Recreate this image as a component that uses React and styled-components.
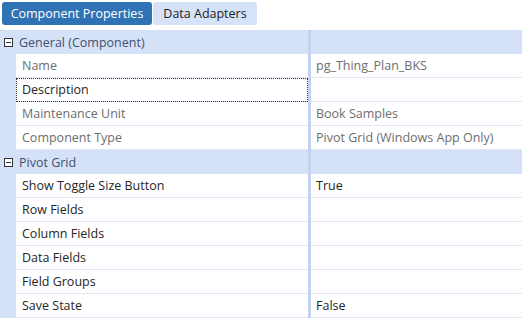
import React from "react";
import styled, { createGlobalStyle } from "styled-components";

const Global = createGlobalStyle`
  html, body { margin: 0; padding: 0; background: #fff; }
  body { font-family: "Open Sans", "Noto Sans", sans-serif; }
`;

const Page = styled.div`
  width: 522px;
  height: 326px;
  overflow: hidden;
  background: #fff;
`;

const TabBar = styled.div`
  display: flex;
  gap: 1px;
  padding: 2px 0 0 2px;
  height: 27px;
  box-sizing: border-box;
`;

const Tab = styled.div`
  height: 23px;
  display: flex;
  align-items: center;
  justify-content: center;
  font-size: 12.5px;
  white-space: nowrap;
  border-radius: 3px;
  box-sizing: border-box;
  width: ${(p) => p.$w}px;
  background: ${(p) => (p.$active ? "#2f73b5" : "#d6e2f7")};
  color: ${(p) => (p.$active ? "#ffffff" : "#1e1e1e")};
`;

const Grid = styled.div`
  margin-top: 3px;
  display: flex;
  flex-direction: column;
`;

const GroupRow = styled.div`
  height: 24px;
  display: flex;
  align-items: center;
  background: #d5e1f7;
`;

const Toggle = styled.div`
  width: 16px;
  display: flex;
  justify-content: center;
  align-items: center;
`;

const GroupTitle = styled.div`
  font-size: 12.5px;
  color: #3f5270;
  padding-left: 3px;
  flex: 0 0 289px;
`;

const GroupDivider = styled.div`
  width: 3px;
  align-self: stretch;
  background: #c3d3ef;
`;

const Row = styled.div`
  height: 24px;
  display: flex;
  background: #d5e1f7;
`;

const Margin = styled.div`
  width: 16px;
  flex: 0 0 16px;
`;

const Cell = styled.div`
  background: #fff;
  display: flex;
  align-items: center;
  box-sizing: border-box;
  border-bottom: 1px solid #dfe7f6;
  font-size: 12.5px;
  color: ${(p) => (p.$readonly ? "#6e6e6e" : "#262626")};
  white-space: nowrap;
  overflow: hidden;
`;

const NameCell = styled(Cell)`
  flex: 0 0 292px;
  padding-left: 6px;
  outline: ${(p) => (p.$focused ? "1px dotted #333" : "none")};
  outline-offset: -1px;
`;

const Divider = styled.div`
  flex: 0 0 3px;
  background: #c3d3ef;
`;

const ValueCell = styled(Cell)`
  flex: 1;
  padding-left: 5px;
`;

const Minus = () => (
  <svg width="9" height="9" viewBox="0 0 9 9">
    <rect x="0.5" y="0.5" width="8" height="8" fill="#fff" stroke="#333" />
    <rect x="2" y="4" width="5" height="1" fill="#333" />
  </svg>
);

const groups = [
  {
    title: "General (Component)",
    rows: [
      { name: "Name", value: "pg_Thing_Plan_BKS", ro: true },
      { name: "Description", value: "", focused: true },
      { name: "Maintenance Unit", value: "Book Samples", ro: true },
      { name: "Component Type", value: "Pivot Grid (Windows App Only)", ro: true },
    ],
  },
  {
    title: "Pivot Grid",
    rows: [
      { name: "Show Toggle Size Button", value: "True" },
      { name: "Row Fields", value: "" },
      { name: "Column Fields", value: "" },
      { name: "Data Fields", value: "" },
      { name: "Field Groups", value: "" },
      { name: "Save State", value: "False" },
    ],
  },
];

export default function App() {
  return (
    <Page>
      <Global />
      <TabBar>
        <Tab $active $w={150}>Component Properties</Tab>
        <Tab $w={104}>Data Adapters</Tab>
      </TabBar>
      <Grid>
        {groups.map((g) => (
          <React.Fragment key={g.title}>
            <GroupRow>
              <Toggle>
                <Minus />
              </Toggle>
              <GroupTitle>{g.title}</GroupTitle>
              <GroupDivider />
            </GroupRow>
            {g.rows.map((r) => (
              <Row key={r.name}>
                <Margin />
                <NameCell $readonly={r.ro} $focused={r.focused}>
                  {r.name}
                </NameCell>
                <Divider />
                <ValueCell $readonly={r.ro}>{r.value}</ValueCell>
              </Row>
            ))}
          </React.Fragment>
        ))}
      </Grid>
    </Page>
  );
}
